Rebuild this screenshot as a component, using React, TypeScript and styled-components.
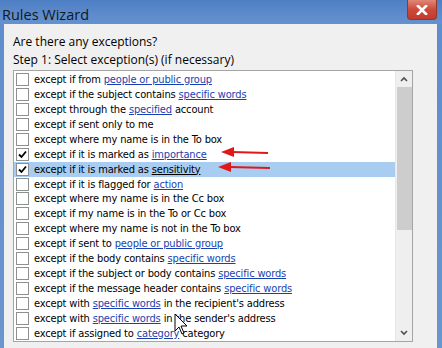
import React from "react";
import styled, { createGlobalStyle } from "styled-components";

const Global = createGlobalStyle`
  html, body { margin: 0; padding: 0; background: #f0f0f0; }
  body { width: 442px; height: 348px; overflow: hidden; }
`;

const Window = styled.div`
  position: relative;
  width: 442px;
  height: 348px;
  background: linear-gradient(180deg, #5f8ccb 0%, #6a95cf 100%);
  display: flex;
  flex-direction: column;
  font-family: "DejaVu Sans Condensed", "Liberation Sans", Arial, sans-serif;
  overflow: hidden;
`;

const TitleBar = styled.div`
  height: 24px;
  display: flex;
  align-items: center;
  justify-content: space-between;
  padding-left: 2px;
  padding-right: 5px;
  background: linear-gradient(180deg, #4e7fc4 0%, #5d8bcc 60%, #6592ce 100%);
`;

const Title = styled.div`
  font-family: "Open Sans", "Liberation Sans", sans-serif;
  font-size: 14.5px;
  color: #101820;
  margin-top: 4px;
`;

const Close = styled.div`
  align-self: flex-start;
  width: 28px;
  height: 19px;
  background: linear-gradient(180deg, #e08778 0%, #cc4a3a 50%, #c23b2c 100%);
  border: 1px solid #8d3a33;
  border-top: none;
  border-radius: 0 0 4px 4px;
  display: flex;
  align-items: center;
  justify-content: center;
`;

const Client = styled.div`
  flex: 1;
  margin: 0 5px 0 4px;
  background: #f0f0f0;
  padding: 9px 0 0 9px;
  display: flex;
  flex-direction: column;
`;

const Label = styled.div`
  font-family: "Open Sans", "Liberation Sans", sans-serif;
  font-size: 12px;
  color: #000;
  height: 18px;
  line-height: 18px;
`;

const ListBox = styled.div`
  margin-top: 1px;
  width: 398px;
  height: 270px;
  border: 1px solid #a5a5a5;
  background: #fff;
  display: flex;
  overflow: hidden;
`;

const Rows = styled.div`
  flex: 1;
  padding-top: 1px;
  display: flex;
  flex-direction: column;
`;

const Row = styled.div<{ $selected?: boolean }>`
  height: 15px;
  display: flex;
  align-items: center;
  gap: 5px;
  padding-left: 2px;
  background: ${(p) => (p.$selected ? "#a9cdf1" : "transparent")};
  font-size: 11px;
  letter-spacing: -0.15px;
  color: #000;
  white-space: nowrap;
`;

const Box = styled.div`
  width: 11px;
  height: 11px;
  border: 1px solid #8e8f8f;
  background: #fff;
  flex-shrink: 0;
  display: flex;
  align-items: center;
  justify-content: center;
`;

const Link = styled.span<{ $dark?: boolean }>`
  color: ${(p) => (p.$dark ? "#000" : "#1a3fb0")};
  text-decoration: underline;
  text-underline-offset: 1px;
`;

const ScrollBar = styled.div`
  width: 16px;
  background: #efefef;
  border-left: 1px solid #e8e8e8;
  display: flex;
  flex-direction: column;
  align-items: center;
`;

const Arrow = styled.div`
  height: 16px;
  width: 16px;
  display: flex;
  align-items: center;
  justify-content: center;
`;

const Thumb = styled.div`
  width: 15px;
  height: 143px;
  background: #cdcdcd;
`;

const Track = styled.div`
  flex: 1;
`;

const Overlay = styled.svg`
  position: absolute;
  left: 0;
  top: 0;
  pointer-events: none;
`;

const Check = () => (
  <svg width="9" height="9" viewBox="0 0 9 9">
    <path d="M1 4.5 L3.5 7 L8 1.5" stroke="#000" strokeWidth="1.8" fill="none" />
  </svg>
);

type Item = { parts: (string | { link: string })[]; checked?: boolean; selected?: boolean };

const items: Item[] = [
  { parts: ["except if from ", { link: "people or public group" }] },
  { parts: ["except if the subject contains ", { link: "specific words" }] },
  { parts: ["except through the ", { link: "specified" }, " account"] },
  { parts: ["except if sent only to me"] },
  { parts: ["except where my name is in the To box"] },
  { parts: ["except if it is marked as ", { link: "importance" }], checked: true },
  { parts: ["except if it is marked as ", { link: "sensitivity" }], checked: true, selected: true },
  { parts: ["except if it is flagged for ", { link: "action" }] },
  { parts: ["except where my name is in the Cc box"] },
  { parts: ["except if my name is in the To or Cc box"] },
  { parts: ["except where my name is not in the To box"] },
  { parts: ["except if sent to ", { link: "people or public group" }] },
  { parts: ["except if the body contains ", { link: "specific words" }] },
  { parts: ["except if the subject or body contains ", { link: "specific words" }] },
  { parts: ["except if the message header contains ", { link: "specific words" }] },
  { parts: ["except with ", { link: "specific words" }, " in the recipient's address"] },
  { parts: ["except with ", { link: "specific words" }, " in the sender's address"] },
  { parts: ["except if assigned to ", { link: "category" }, " category"] },
];

export default function App() {
  return (
    <>
      <Global />
      <Window>
        <TitleBar>
          <Title>Rules Wizard</Title>
          <Close>
            <svg width="12" height="10" viewBox="0 0 12 10">
              <path d="M2 1 L10 9 M10 1 L2 9" stroke="#fff" strokeWidth="2.6" strokeLinecap="square" />
            </svg>
          </Close>
        </TitleBar>
        <Client>
          <Label>Are there any exceptions?</Label>
          <Label>Step 1: Select exception(s) (if necessary)</Label>
          <ListBox>
            <Rows>
              {items.map((it, i) => (
                <Row key={i} $selected={it.selected}>
                  <Box>{it.checked && <Check />}</Box>
                  <span>
                    {it.parts.map((p, j) =>
                      typeof p === "string" ? (
                        <React.Fragment key={j}>{p}</React.Fragment>
                      ) : (
                        <Link key={j} $dark={it.selected}>
                          {p.link}
                        </Link>
                      )
                    )}
                  </span>
                </Row>
              ))}
            </Rows>
            <ScrollBar>
              <Arrow>
                <svg width="8" height="6" viewBox="0 0 8 6">
                  <path d="M1 5 L4 2 L7 5" stroke="#505050" strokeWidth="1.6" fill="none" />
                </svg>
              </Arrow>
              <Thumb />
              <Track />
              <Arrow>
                <svg width="8" height="6" viewBox="0 0 8 6">
                  <path d="M1 1 L4 4 L7 1" stroke="#505050" strokeWidth="1.6" fill="none" />
                </svg>
              </Arrow>
            </ScrollBar>
          </ListBox>
        </Client>
        <Overlay width="442" height="348" viewBox="0 0 442 348">
          <path d="M268 153 L232 152" stroke="#e01818" strokeWidth="2" fill="none" />
          <path d="M221 152 L234 147 L234 157 Z" fill="#e01818" />
          <path d="M270 168 L230 167" stroke="#e01818" strokeWidth="2" fill="none" />
          <path d="M218 167 L231 162 L231 172 Z" fill="#e01818" />
          <path
            d="M175 314 L175 331 L179 327 L182 334 L184 333 L181 326 L187 326 Z"
            fill="#fff"
            stroke="#000"
            strokeWidth="1"
          />
        </Overlay>
      </Window>
    </>
  );
}
